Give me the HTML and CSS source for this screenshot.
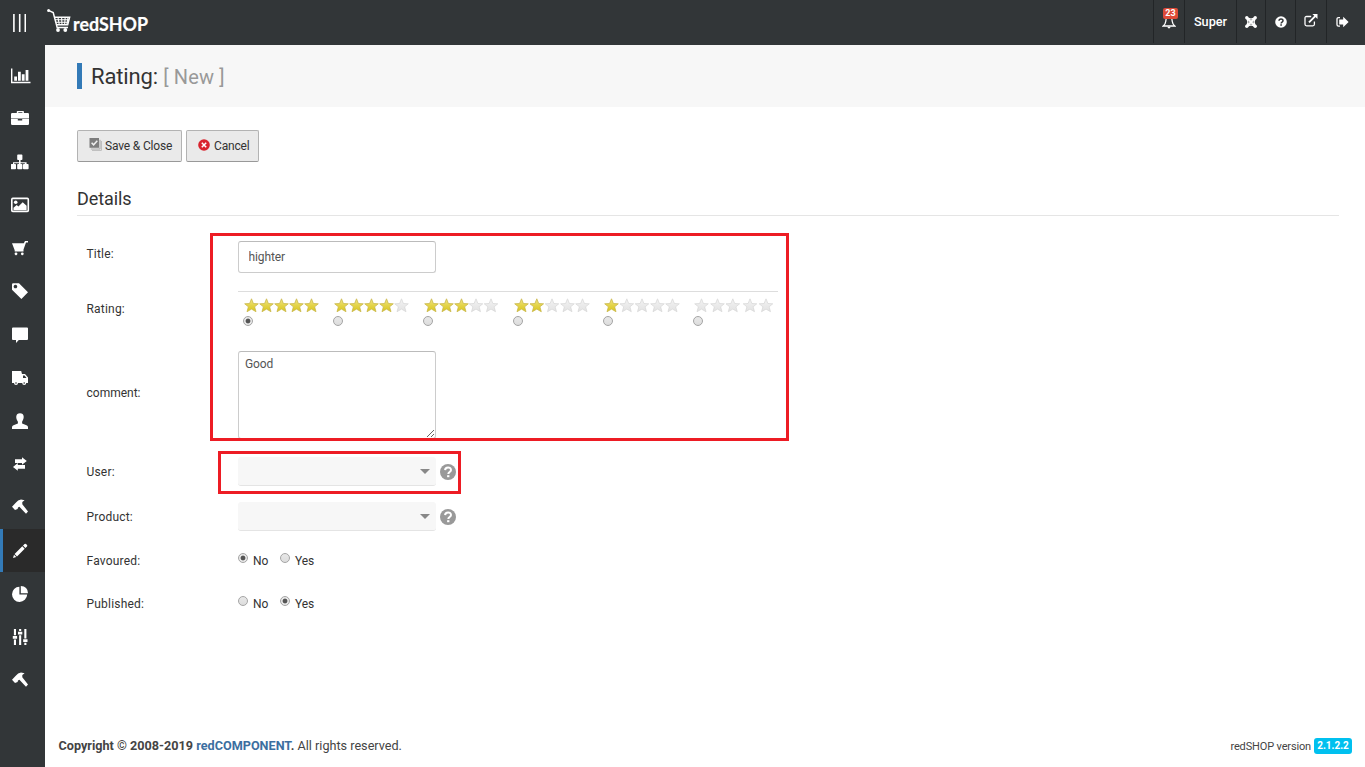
FILE: index.html
```html
<!DOCTYPE html>
<html lang="en">
<head>
<meta charset="utf-8">
<title>Rating: [ New ]</title>
<link rel="stylesheet" href="styles.css">
</head>
<body>
<svg class="defs" width="0" height="0">
  <defs>
    <linearGradient id="gold" x1="0" y1="0" x2="0" y2="1"><stop offset="0" stop-color="#efe58a"/><stop offset=".5" stop-color="#e4d44a"/><stop offset="1" stop-color="#d8c51c"/></linearGradient>
    <linearGradient id="silver" x1="0" y1="0" x2="0" y2="1"><stop offset="0" stop-color="#f3f3f3"/><stop offset="1" stop-color="#e2e2e2"/></linearGradient>
    <path id="star" d="M7.5.8 9.4 5.5 14.3 5.8 10.6 8.8 12 13.7 7.5 11.1 3 13.7 4.4 8.8.7 5.8 5.6 5.5z"/>
    <g id="s1"><use href="#star" fill="url(#gold)" stroke="#c9b74a" stroke-width=".8"/></g>
    <g id="s0"><use href="#star" fill="url(#silver)" stroke="#d6d6d6" stroke-width=".7"/></g>
    <g id="hammer"><path d="M0 7.8 3.5 4Q6 1.1 9 .6L12.6 1.3 10.3 3.1 10.3 5.2 16 12.5 14 14.8 7.4 7.8 6 8.6 5.6 10 3 11z"/></g>
    <g id="help"><circle cx="8" cy="8" r="8"/><path d="M5.1 6.1C5.2 2.5 11 2.6 11 6c0 2.1-2.7 2-2.7 4.1" fill="none" stroke="#fff" stroke-width="2"/><path d="M7.1 11.2h2.3v2H7.1z" fill="#fff"/></g>
  </defs>
</svg>
<header class="topbar">
  <a class="toggle"><svg width="13" height="18" viewBox="0 0 13 18"><path d="M.9 0V18M6.7 0V18M12.3 0V18" stroke="#fff" stroke-width="1.6"/></svg></a>
  <a class="brand"><svg width="112" height="32" viewBox="0 0 112 32">
    <g fill="none" stroke="#fff" stroke-width="1.5"><path d="M2.5 1.8 6.2 3.6 10.2 18.6H21"/><path d="M7.4 8.3H22.6L20.7 15.8H9.4" /><path stroke-width="1.1" d="M8 10.8H22M8.8 13.2H21.2M11 8.3 12.3 16M14.6 8.3 15 16M18.2 8.3 17.6 16M21 8.3 19.8 16"/></g>
    <circle cx="1.6" cy="1.6" r="1.5" fill="#fff"/><circle cx="11" cy="21" r="1.9" fill="#fff"/><circle cx="18.3" cy="21" r="1.9" fill="#fff"/>
    <text class="brand-text" x="26" y="22.4" textLength="75" lengthAdjust="spacingAndGlyphs">redSHOP</text>
  </svg></a>
  <nav class="tools">
    <a class="tool bell"><svg width="14" height="14" viewBox="0 0 14 14"><path d="M7 1.2C4 1.2 4 4.2 3.8 6.3 3.6 8.5 2.6 9.8 1.2 11H12.8C11.4 9.8 10.4 8.5 10.2 6.3 10 4.2 10 1.2 7 1.2z" fill="none" stroke="#fff" stroke-width="1.3"/><path d="M5.4 11.8h3.2q-.3 1.6-1.6 1.6t-1.6-1.6z" fill="#fff"/></svg><span class="count">23</span></a>
    <a class="tool user">Super</a>
    <a class="tool joomla"><svg width="12" height="12" viewBox="0 0 12 12"><path d="M1.8 1.8 10.2 10.2M10.2 1.8 1.8 10.2" fill="none" stroke="#fff" stroke-width="2.2"/><path d="M2 1.8 6 3 10 1.8M2 10.2 6 9 10 10.2M1.8 2 3 6 1.8 10M10.2 2 9 6 10.2 10" fill="none" stroke="#fff" stroke-width="1.3"/><g fill="#fff"><circle cx="1.8" cy="1.8" r="1.7"/><circle cx="10.2" cy="1.8" r="1.7"/><circle cx="1.8" cy="10.2" r="1.7"/><circle cx="10.2" cy="10.2" r="1.7"/></g></svg></a>
    <a class="tool question"><svg width="12" height="12" viewBox="0 0 12 12"><circle cx="6" cy="6" r="5.8" fill="#fff"/><path d="M4 4.8C4.1 2.3 8 2.4 8 4.7 8 6.1 6.1 6 6.1 7.4" fill="none" stroke="#323638" stroke-width="1.5"/><path d="M5.3 8.2h1.6v1.5H5.3z" fill="#323638"/></svg></a>
    <a class="tool preview"><svg width="14" height="13" viewBox="0 0 14 13"><path d="M7.2 2.5H2.6Q1 2.5 1 4V10.3Q1 11.8 2.6 11.8H8.9Q10.4 11.8 10.4 10.3V7.4" fill="none" stroke="#fff" stroke-width="1.3"/><path d="M5 8.3 11.5 1.8" stroke="#fff" stroke-width="1.9"/><path d="M8.4 0H13.5V5.1z" fill="#fff"/></svg></a>
    <a class="tool logout"><svg width="13" height="12" viewBox="0 0 13 12"><path d="M4 1.7H2.5Q1 1.7 1 3.1V8.8Q1 10.2 2.5 10.2H4" fill="none" stroke="#fff" stroke-width="1.3"/><path d="M3.2 3.6H7.2V.8L12.6 6 7.2 11.2V8.4H3.2z" fill="#fff"/></svg></a>
  </nav>
</header>
<div class="body">
  <aside class="sidebar">
    <a class="item"><svg class="wide" viewBox="0 0 20 16"><path d="M0 .5H1.4V13.8H19.5V15.3H0zM3.2 8.5H6V12.7H3.2zM7 3.7H9.8V12.7H7zM10.8 6.3H13.6V12.7H10.8zM14.6 2.1H17.4V12.7H14.6z"/></svg></a>
    <a class="item"><svg class="wide up" viewBox="0 0 20 16"><path d="M5.8 3V1.6Q5.8 1 6.6 1H12.1Q12.9 1 12.9 1.6V3H16.8Q18 3 18 4.2V8.4H0V4.2Q0 3 1.2 3zM7.3 3H11.4V2.2H7.3zM0 8.9H6.8V10.6H11.2V8.9H18V13.8Q18 15 16.8 15H1.2Q0 15 0 13.8z" fill-rule="evenodd"/></svg></a>
    <a class="item"><svg class="wide" viewBox="0 0 20 16"><path d="M6.2 1.3Q6.2.6 7 .6h3.6q.8 0 .8.7v4q0 .7-.8.7h-1v2.2h6V10h1.2q.8 0 .8.8v3.6q0 .8-.8.8h-4q-.8 0-.8-.8v-3.6q0-.8.8-.8h1V9.2H9.6V10h1q.8 0 .8.8v3.6q0 .8-.8.8H7q-.8 0-.8-.8v-3.6q0-.8.8-.8h1v-.8H3.2V10h1q.8 0 .8.8v3.6q0 .8-.8.8H.6q-.8 0-.8-.8v-3.6q0-.8.8-.8H2V8.2h6V6H7q-.8 0-.8-.7z"/></svg></a>
    <a class="item"><svg class="wide" viewBox="0 0 20 16"><rect x=".8" y="1.4" width="16.5" height="13" rx="1" fill="none" stroke="#fff" stroke-width="1.6"/><circle cx="4.7" cy="5.2" r="1.8"/><path d="M2.5 12.9V10.7L5.7 8.1 7.4 9.5 11.7 5.2 15.6 8.8V12.9z"/></svg></a>
    <a class="item"><svg class="up" viewBox="0 0 16 16"><path d="M0 3.2H11.8L13 .9H16V2.4H14L11.5 9.5V11.6H2.7V10.2z"/><circle cx="4" cy="13.8" r="1.4"/><circle cx="10.3" cy="13.8" r="1.4"/></svg></a>
    <a class="item"><svg class="up" viewBox="0 0 16 16"><path d="M0 1.5Q0 .3 1.2.3H7L16 9.3 9.4 16 0 6.7zM3.4 1.7a1.8 1.8 0 1 0 .1 0z" fill-rule="evenodd"/></svg></a>
    <a class="item"><svg viewBox="0 0 16 16"><path d="M1 .5H15Q16 .5 16 1.5V12Q16 13 15 13H6.8L4 16V13H1Q0 13 0 12V1.5Q0 .5 1 .5z"/></svg></a>
    <a class="item"><svg viewBox="0 0 16 16"><path d="M0 1H9.2L10 4H13L16 7.5V13H0zM11 5.5V8H14.5L12.6 5.5z" fill-rule="evenodd"/><circle cx="4" cy="13" r="2"/><circle cx="12.2" cy="13" r="2"/><g fill="#323638"><circle cx="4" cy="13" r=".8"/><circle cx="12.2" cy="13" r=".8"/></g></svg></a>
    <a class="item"><svg viewBox="0 0 16 16"><path d="M8 .3C12.6.3 12.5 5.5 10.1 8.7V10.5L14.5 12.2Q16 12.8 16 14.2V16H0V14.2Q0 12.8 1.5 12.2L5.9 10.5V8.7C3.5 5.5 3.4.3 8 .3z"/></svg></a>
    <a class="item"><svg viewBox="0 0 16 16"><path d="M3 3.2H10V1.2L14.8 5 10 8.7V6.9H3zM13 8.9H5.8V7.1L1 10.9 5.8 14.8V12.8H13z"/></svg></a>
    <a class="item"><svg viewBox="0 0 16 16"><use href="#hammer"/></svg></a>
    <a class="item active"><svg class="down" viewBox="0 0 16 16"><path d="M11 2.6 12.6 1Q13.3.4 14 1L15 2Q15.7 2.7 15 3.4L13.4 5zM10.3 3.3 12.7 5.7 5 13.4 2.6 11zM2 11.7 4.3 14 1 15z"/></svg></a>
    <a class="item"><svg viewBox="0 0 16 16"><path d="M7.4.7V8.6H15.2A7.6 7.6 0 1 1 7.4.7zM8.8 0Q15.7.2 16 7.2H8.8z"/></svg></a>
    <a class="item"><svg viewBox="0 0 16 16"><path d="M1.9 0H4V6.2H1.9zM.8 7H5.1V9.7H.8zM1.9 10.5H4V16H1.9zM7.1 0H9.2V2H7.1zM6 2.8H10.3V5.5H6zM7.1 6.3H9.2V16H7.1zM12.3 0H14.4V9.5H12.3zM11.2 10.3H15.5V13H11.2zM12.3 13.8H14.4V16H12.3z"/></svg></a>
    <a class="item"><svg viewBox="0 0 16 16"><use href="#hammer"/></svg></a>
  </aside>
  <div class="page">
    <div class="heading"><h1>Rating: <small>[ New ]</small></h1></div>
    <main class="content">
      <div class="actions">
        <button class="btn save"><svg width="13" height="13" viewBox="0 0 13 13"><path d="M3 12.4H12.4V3" fill="none" stroke="#bbb" stroke-width="1"/><path d="M1.8 11H11V1.8" fill="none" stroke="#aaa" stroke-width="1"/><path d="M.5 0H10V9.8H.5z" fill="#7d7d7d"/><path d="M2.6 4.7 4.6 6.8 8.3 2.7" fill="none" stroke="#eee" stroke-width="1.5"/></svg>Save &amp; Close</button>
        <button class="btn cancel"><svg width="12" height="12" viewBox="0 0 12 12"><circle cx="6" cy="6" r="5.8" fill="#d9232d"/><path d="M3.8 3.8 8.2 8.2M8.2 3.8 3.8 8.2" stroke="#fff" stroke-width="1.5"/></svg>Cancel</button>
      </div>
      <h2>Details</h2>
      <form class="form">
        <div class="row title"><label>Title:</label><input class="field" type="text" value="highter"></div>
        <div class="row rating"><label>Rating:</label>
          <div class="ratings">
            <div class="choice"><svg class="stars"><use href="#s1"/><use href="#s1" x="15"/><use href="#s1" x="30"/><use href="#s1" x="45"/><use href="#s1" x="60"/></svg><i class="radio on"></i></div>
            <div class="choice"><svg class="stars"><use href="#s1"/><use href="#s1" x="15"/><use href="#s1" x="30"/><use href="#s1" x="45"/><use href="#s0" x="60"/></svg><i class="radio"></i></div>
            <div class="choice"><svg class="stars"><use href="#s1"/><use href="#s1" x="15"/><use href="#s1" x="30"/><use href="#s0" x="44.5"/><use href="#s0" x="59.5"/></svg><i class="radio"></i></div>
            <div class="choice"><svg class="stars"><use href="#s1"/><use href="#s1" x="15.3"/><use href="#s0" x="30.5"/><use href="#s0" x="46"/><use href="#s0" x="61"/></svg><i class="radio"></i></div>
            <div class="choice"><svg class="stars"><use href="#s1"/><use href="#s0" x="15.3"/><use href="#s0" x="30.5"/><use href="#s0" x="46"/><use href="#s0" x="61"/></svg><i class="radio"></i></div>
            <div class="choice"><svg class="stars"><use href="#s0"/><use href="#s0" x="16"/><use href="#s0" x="31.3"/><use href="#s0" x="48.5"/><use href="#s0" x="64.5"/></svg><i class="radio"></i></div>
          </div>
        </div>
        <div class="row comment"><label>comment:</label><textarea class="field">Good</textarea></div>
        <div class="row pick"><label>User:</label><div class="select"></div><svg class="help" viewBox="0 0 16 16"><use href="#help"/></svg></div>
        <div class="row pick"><label>Product:</label><div class="select"></div><svg class="help" viewBox="0 0 16 16"><use href="#help"/></svg></div>
        <div class="row yesno"><label>Favoured:</label><i class="radio on"></i><span>No</span><i class="radio"></i><span>Yes</span></div>
        <div class="row yesno"><label>Published:</label><i class="radio"></i><span>No</span><i class="radio on"></i><span>Yes</span></div>
      </form>
    </main>
    <footer class="footer"><div class="copy"><b>Copyright © 2008-2019 <a>redCOMPONENT</a>.</b> All rights reserved.</div><div class="version">redSHOP version <span>2.1.2.2</span></div></footer>
  </div>
</div>
<div class="mark mark-fields"></div>
<div class="mark mark-user"></div>
</body>
</html>
```

FILE: styles.css
```css
* { box-sizing: border-box; }
body { margin: 0; width: 1365px; height: 767px; overflow: hidden; position: relative; display: flex; flex-direction: column; font: 12px/20px Roboto, sans-serif; color: #333; background: #fff; }
.defs { position: absolute; }
.topbar { height: 45px; flex: none; display: flex; background: #323638; color: #fff; }
.toggle { width: 45px; padding: 14px 0 0 13px; }
.toggle svg { display: block; }
.brand { padding: 9px 0 0 2px; }
.brand svg { display: block; overflow: visible; }
.brand-text { font: 700 19px Lato, sans-serif; fill: #fff; stroke: #fff; stroke-width: .2px; }
.tools { margin-left: auto; display: flex; height: 43px; }
.tool { position: relative; display: flex; align-items: center; justify-content: center; border-left: 1px solid #222527; }
.tool svg { display: block; }
.bell { width: 31px; padding-top: 1px; }
.count { position: absolute; left: 9px; top: 8px; width: 15px; height: 11px; border-radius: 2px; background: #dd4b39; font: 700 9px/11px Roboto, sans-serif; text-align: center; }
.user { width: 52px; font-size: 12.7px; font-weight: 500; }
.joomla { width: 29px; }
.question { width: 30px; }
.preview { width: 31px; padding-bottom: 2px; }
.logout { width: 39px; padding-right: 8px; }
.body { flex: 1; display: flex; min-height: 0; }
.sidebar { width: 45px; flex: none; padding-top: 9.5px; background: #323638; }
.item { display: flex; align-items: center; height: 43.14px; padding-left: 12px; }
.item svg { width: 16px; height: 16px; fill: #fff; }
.item svg.wide { width: 20px; margin-left: -1px; }
.item svg.up { margin-bottom: 2px; }
.item svg.down { margin-top: 2px; }
.item.active { background: #2a2a2a; border-left: 3px solid #337ab7; padding-left: 9px; }
.page { flex: 1; display: flex; flex-direction: column; }
.heading { height: 62px; background: #f7f7f7; padding: 18px 0 0 32px; }
h1 { margin: 0; height: 26px; border-left: 5px solid #337ab7; padding-left: 9px; font-size: 22px; line-height: 28px; font-weight: 400; letter-spacing: -.15px; }
h1 small { font-size: 20px; color: #999; letter-spacing: .15px; }
.content { flex: 1; padding: 23px 26px 0 32px; }
.actions { display: flex; gap: 4px; height: 32px; }
.btn { display: flex; align-items: center; height: 32px; padding: 0 0 1px 11px; border: 1px solid #b3b3b3; border-bottom-color: #999; border-radius: 2px; background: #eaeaea; font: 12px Roboto, sans-serif; letter-spacing: -.17px; color: #333; white-space: nowrap; }
.save { width: 105px; }
.cancel { width: 73px; }
.btn svg { flex: none; margin: -2px 3px 0 0; }
.cancel svg { margin-right: 4px; }
h2 { margin: 27px 0 0; height: 27px; border-bottom: 1px solid #e5e5e5; font-size: 18px; line-height: 20px; font-weight: 400; letter-spacing: -.1px; }
.form { padding: 25px 0 0 9.5px; }
.row { display: flex; }
.row label { width: 151.5px; flex: none; letter-spacing: .2px; }
.row.comment label { letter-spacing: 0; }
.title { height: 50px; }
.title label { padding-top: 3px; }
.field { width: 198px; border: 1px solid #ccc; border-top-color: #bbb; border-radius: 3px; font: 12px/16px Roboto, sans-serif; color: #555; background: #fff; outline: 0; }
input.field { height: 32px; padding: 0 9.5px; letter-spacing: -.1px; }
.rating { height: 60px; }
.rating label { padding-top: 8px; }
.ratings { width: 540px; height: 40px; display: flex; border-top: 1px solid #ddd; }
.choice { width: 90px; padding: 6px 0 0 5px; }
.stars { display: block; width: 80px; height: 15px; margin-left: .5px; }
.radio { display: block; width: 10px; height: 10px; flex: none; border: 1px solid #a5a5a5; border-radius: 50%; background: linear-gradient(#e8e8e8, #ddd); }
.radio.on { background: radial-gradient(circle, #555 0 2px, #e8e8e8 2.8px); }
.choice .radio { margin-top: 3px; }
.comment { height: 98px; }
.comment label { padding-top: 32px; }
textarea.field { height: 88px; padding: 4px 6px; letter-spacing: -.1px; resize: both; }
.pick { height: 45px; padding-top: 8px; align-items: flex-start; }
.pick label { padding-top: 5px; }
.select { width: 198px; height: 29px; border-bottom: 1px solid #e4e4e4; border-radius: 3px; background: #f7f7f7; padding: 12px 6px; }
.select::after { content: ""; display: block; margin-left: auto; width: 0; border: 5px solid transparent; border-top: 5px solid #888; border-bottom: 0; }
.help { width: 16px; height: 16px; margin: 7px 0 0 4px; fill: #999; }
.yesno { height: 43px; padding-top: 12px; }
.yesno .radio { margin-top: 2px; }
.yesno span { width: 27px; padding-left: 5px; margin-right: 5px; letter-spacing: -.1px; }
.footer { display: flex; justify-content: space-between; height: 42px; padding: 11px 13px 0 13.5px; line-height: 20px; color: #444; }
.copy { font-size: 12.65px; }
.copy a { color: #3c6e9f; }
.version { font-size: 11px; letter-spacing: -.15px; display: flex; gap: 3px; padding-top: 1px; }
.version span { width: 38px; height: 16px; margin-top: 1px; border-radius: 3px; background: #00c0ef; color: #fff; font: 700 10px/16px Roboto, sans-serif; letter-spacing: 0; text-align: center; }
.mark { position: absolute; border: 3px solid #ed1c24; }
.mark-fields { left: 210px; top: 233px; width: 579px; height: 208px; }
.mark-user { left: 218px; top: 451px; width: 243px; height: 43px; }
```
